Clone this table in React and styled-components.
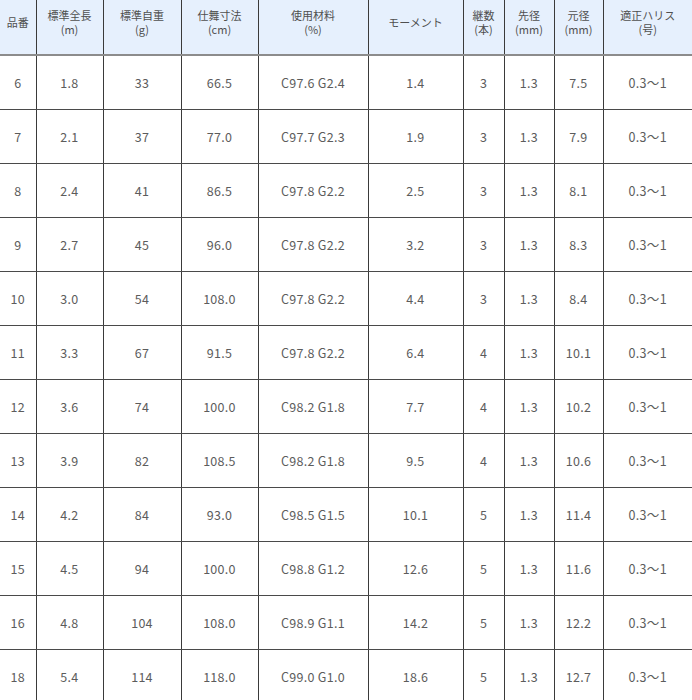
import React from 'react';
import styled, { createGlobalStyle } from 'styled-components';

const GlobalStyle = createGlobalStyle`
  html, body {
    margin: 0;
    padding: 0;
    background: #ffffff;
  }
  body {
    font-family: "Noto Sans CJK JP", "Noto Sans", sans-serif;
  }
`;

const COLUMNS = [
  { label: '品番', width: 36 },
  { label: '標準全長', unit: '(m)', width: 67 },
  { label: '標準自重', unit: '(g)', width: 78 },
  { label: '仕舞寸法', unit: '(cm)', width: 77 },
  { label: '使用材料', unit: '(%)', width: 110 },
  { label: 'モーメント', width: 95 },
  { label: '継数', unit: '(本)', width: 41 },
  { label: '先径', unit: '(mm)', width: 50 },
  { label: '元径', unit: '(mm)', width: 49 },
  { label: '適正ハリス', unit: '(号)', width: 89 },
];

const ROWS = [
  ['6', '1.8', '33', '66.5', 'C97.6 G2.4', '1.4', '3', '1.3', '7.5'],
  ['7', '2.1', '37', '77.0', 'C97.7 G2.3', '1.9', '3', '1.3', '7.9'],
  ['8', '2.4', '41', '86.5', 'C97.8 G2.2', '2.5', '3', '1.3', '8.1'],
  ['9', '2.7', '45', '96.0', 'C97.8 G2.2', '3.2', '3', '1.3', '8.3'],
  ['10', '3.0', '54', '108.0', 'C97.8 G2.2', '4.4', '3', '1.3', '8.4'],
  ['11', '3.3', '67', '91.5', 'C97.8 G2.2', '6.4', '4', '1.3', '10.1'],
  ['12', '3.6', '74', '100.0', 'C98.2 G1.8', '7.7', '4', '1.3', '10.2'],
  ['13', '3.9', '82', '108.5', 'C98.2 G1.8', '9.5', '4', '1.3', '10.6'],
  ['14', '4.2', '84', '93.0', 'C98.5 G1.5', '10.1', '5', '1.3', '11.4'],
  ['15', '4.5', '94', '100.0', 'C98.8 G1.2', '12.6', '5', '1.3', '11.6'],
  ['16', '4.8', '104', '108.0', 'C98.9 G1.1', '14.2', '5', '1.3', '12.2'],
  ['18', '5.4', '114', '118.0', 'C99.0 G1.0', '18.6', '5', '1.3', '12.7'],
].map((r) => [...r, '0.3〜1']);

const SpecTable = styled.table`
  width: 692px;
  table-layout: fixed;
  border-collapse: collapse;
  border-spacing: 0;
  color: #5c5c5c;
`;

const HeadCell = styled.th`
  height: 44px;
  padding: 0 0 10px;
  background: #e6f0fd;
  border-left: 1px solid #3a3a3a;
  border-bottom: 2px solid #8c8c8c;
  font-size: 11px;
  font-weight: 400;
  line-height: 14px;
  color: #4f4f4f;
  text-align: center;
  vertical-align: middle;

  &:first-child {
    border-left: none;
  }
`;

const Unit = styled.span`
  display: block;
`;

const Cell = styled.td`
  height: 53px;
  padding: 0;
  border-left: 1px solid #3a3a3a;
  border-bottom: 1px solid #4a4a4a;
  font-size: 12.5px;
  letter-spacing: 0.3px;
  line-height: 16px;
  text-align: center;
  vertical-align: middle;

  &:first-child {
    border-left: none;
  }
`;

export default function App() {
  return (
    <>
      <GlobalStyle />
      <SpecTable>
        <colgroup>
          {COLUMNS.map((c) => (
            <col key={c.label} style={{ width: c.width }} />
          ))}
        </colgroup>
        <thead>
          <tr>
            {COLUMNS.map((c) => (
              <HeadCell key={c.label}>
                {c.label}
                {c.unit && <Unit>{c.unit}</Unit>}
              </HeadCell>
            ))}
          </tr>
        </thead>
        <tbody>
          {ROWS.map((row) => (
            <tr key={row[0]}>
              {row.map((v, i) => (
                <Cell key={i}>{v}</Cell>
              ))}
            </tr>
          ))}
        </tbody>
      </SpecTable>
    </>
  );
}
